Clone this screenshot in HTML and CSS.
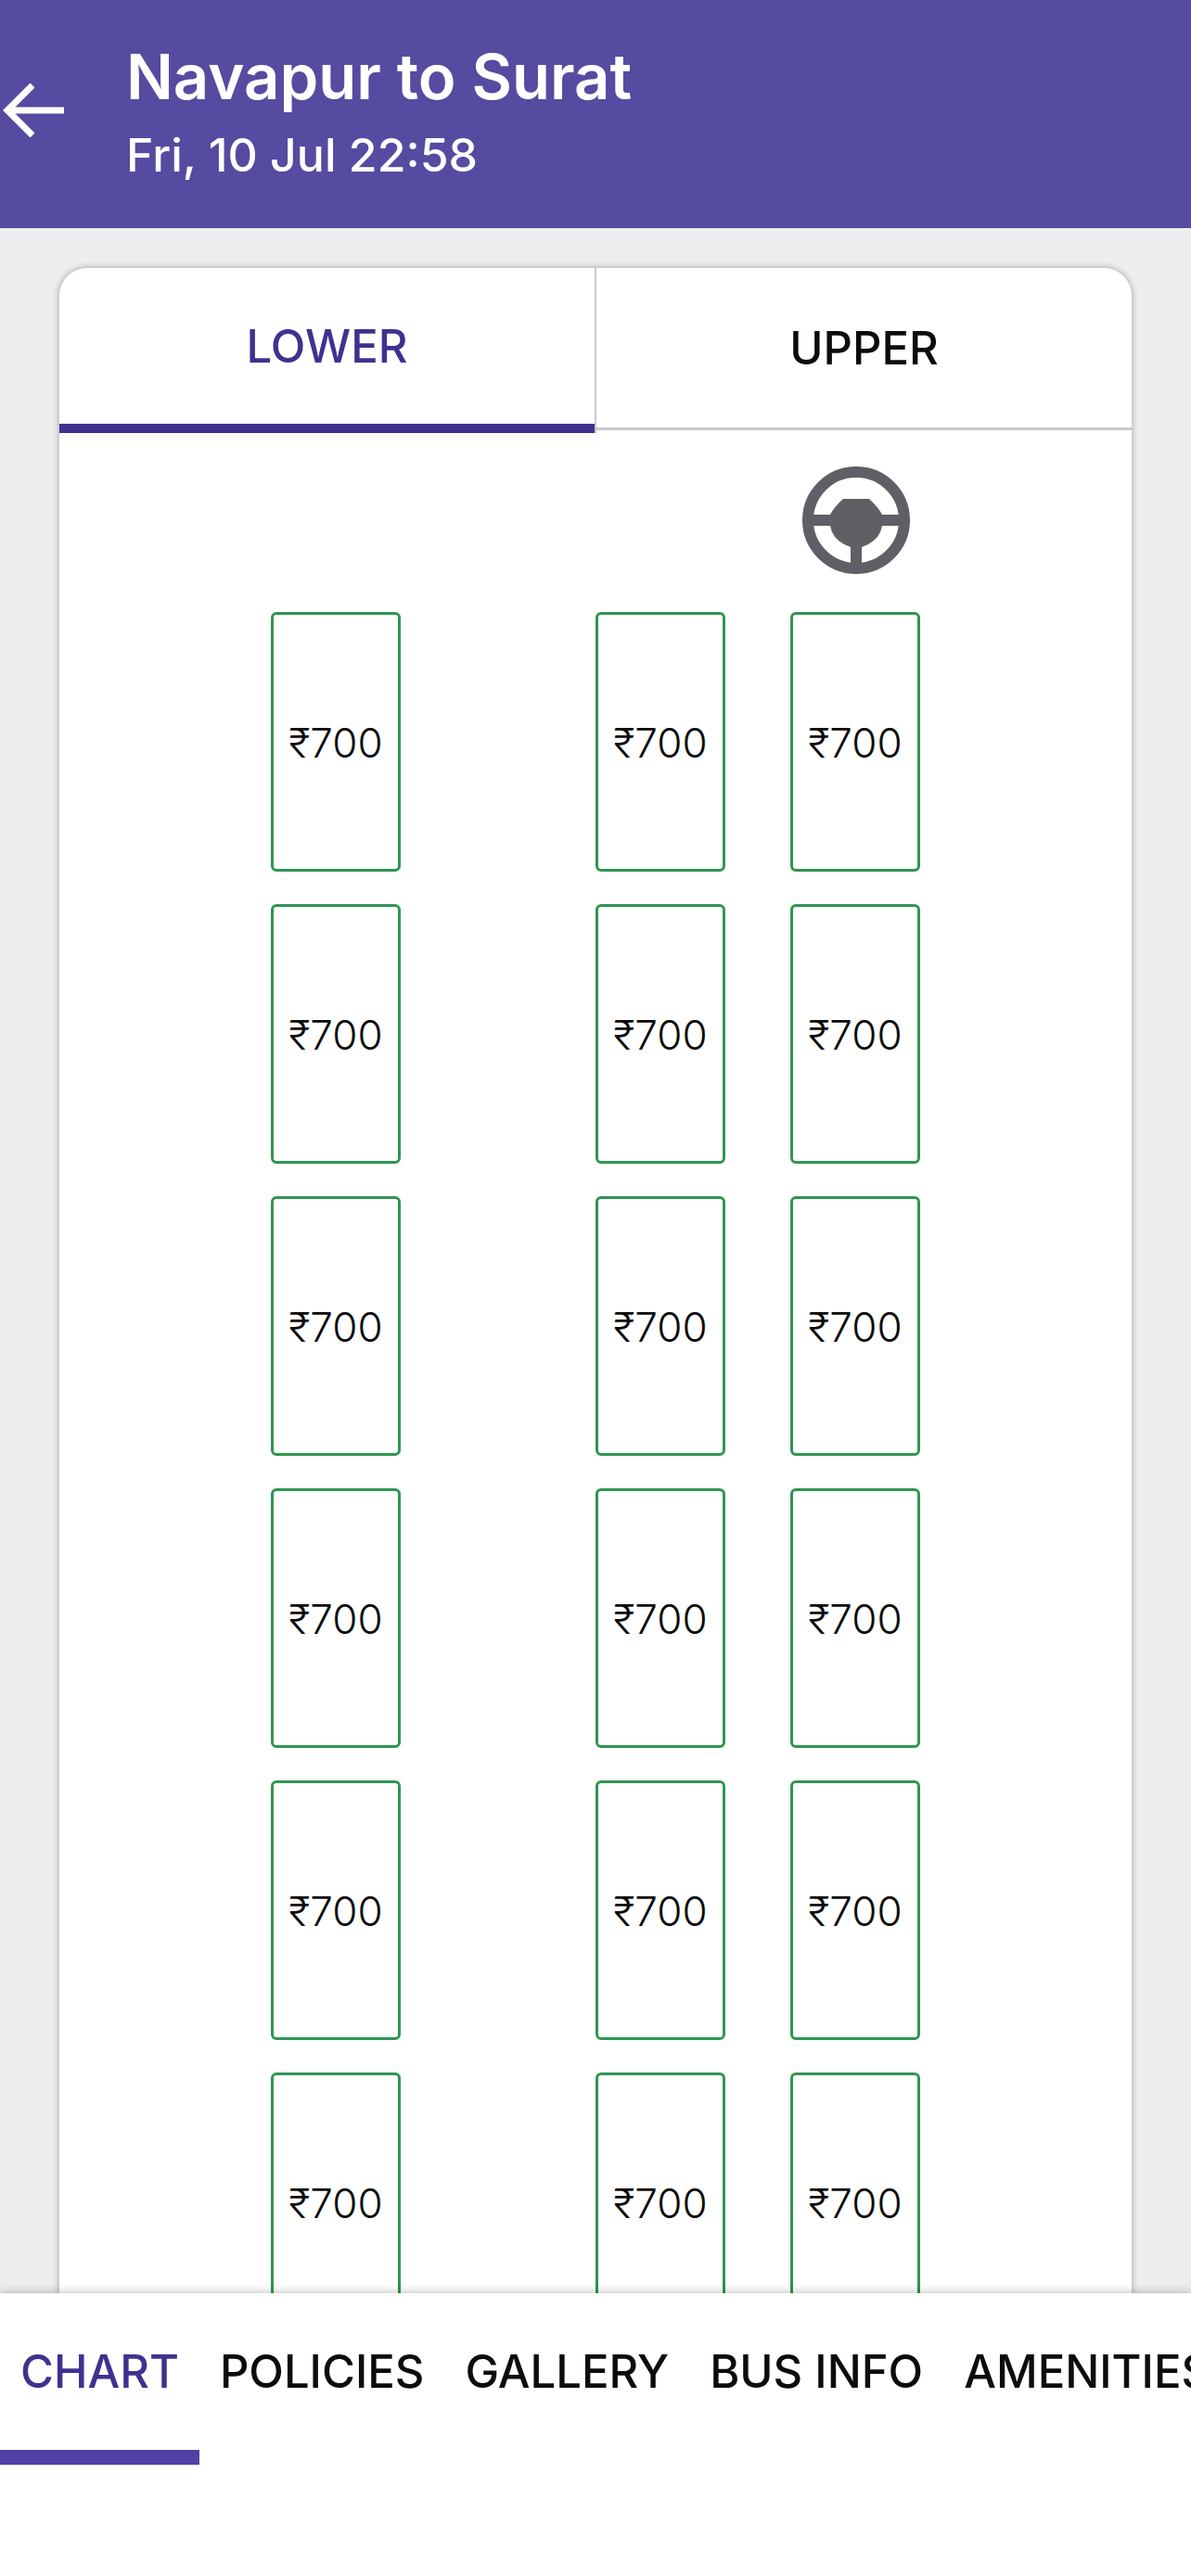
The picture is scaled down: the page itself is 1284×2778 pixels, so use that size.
FILE: index.html
```html
<!DOCTYPE html>
<html lang="en">
  <head>
    <meta charset="utf-8">
    <meta name="viewport" content="width=device-width">
    <title>Navapur to Surat</title>
    <link rel="stylesheet" href="styles.css">
  </head>
  <body>
    <header class="header">
      <a class="header__back" href="#" aria-label="Back">
        <svg width="68" height="60" viewBox="0 0 68 60" fill="none" stroke="currentColor" stroke-width="7">
          <path d="M67 31H5M33 4L6 31l27 27" />
        </svg>
      </a>
      <div>
        <h1 class="header__title">Navapur to Surat</h1>
        <p class="header__date">Fri, 10 Jul 22:58</p>
      </div>
    </header>

    <main class="content">
      <div class="card">
        <div class="decks">
          <button class="deck deck--active" type="button">LOWER</button>
          <button class="deck" type="button">UPPER</button>
        </div>

        <div class="seats">
          <svg class="wheel" width="122" height="122" viewBox="0 0 122 122" fill="#5f6065">
            <circle cx="62" cy="58" r="52" fill="none" stroke="#5f6065" stroke-width="12" />
            <path d="M11 52h23q4-8 14-17h28q10 9 14 17h23v12H90q-2 13-15 20l-7 3v22H56V87l-7-3q-13-7-15-20H11z" />
          </svg>

          <button class="seat seat--single" type="button">₹700</button>
          <button class="seat seat--aisle" type="button">₹700</button>
          <button class="seat seat--window" type="button">₹700</button>

          <button class="seat seat--single" type="button">₹700</button>
          <button class="seat seat--aisle" type="button">₹700</button>
          <button class="seat seat--window" type="button">₹700</button>

          <button class="seat seat--single" type="button">₹700</button>
          <button class="seat seat--aisle" type="button">₹700</button>
          <button class="seat seat--window" type="button">₹700</button>

          <button class="seat seat--single" type="button">₹700</button>
          <button class="seat seat--aisle" type="button">₹700</button>
          <button class="seat seat--window" type="button">₹700</button>

          <button class="seat seat--single" type="button">₹700</button>
          <button class="seat seat--aisle" type="button">₹700</button>
          <button class="seat seat--window" type="button">₹700</button>

          <button class="seat seat--single" type="button">₹700</button>
          <button class="seat seat--aisle" type="button">₹700</button>
          <button class="seat seat--window" type="button">₹700</button>
        </div>
      </div>
    </main>

    <nav class="tabs">
      <a class="tab tab--active" href="#chart">CHART</a>
      <a class="tab" href="#policies">POLICIES</a>
      <a class="tab" href="#gallery">GALLERY</a>
      <a class="tab" href="#businfo">BUS INFO</a>
      <a class="tab" href="#amenities">AMENITIES</a>
    </nav>
  </body>
</html>
```
FILE: styles.css
```css
* {
  box-sizing: border-box;
}
body {
  margin: 0;
  height: 100vh;
  display: flex;
  flex-direction: column;
  overflow: hidden;
  background: #eeeeef;
  color: #0c0c0c;
  font-family: Inter, "Liberation Sans", sans-serif;
}
button {
  font-family: inherit;
  color: inherit;
  cursor: pointer;
}

/* top bar */
.header {
  display: flex;
  align-items: center;
  gap: 66px;
  padding: 39px 0 49px 2px;
  background: #554ba0;
  color: #fff;
}
.header__back {
  display: flex;
  color: inherit;
}
.header__title {
  margin: 0;
  font-size: 67px;
  line-height: 88px;
  font-weight: 600;
}
.header__date {
  margin: 0;
  padding-top: 10px;
  font-size: 50px;
  line-height: 60px;
  font-weight: 500;
}

/* seat chart */
.content {
  flex: 1;
  min-height: 0;
  overflow: hidden;
  padding: 41px 62px 0;
}
.card {
  border-radius: 32px 32px 0 0;
  border: 2px solid #cfcfd0;
  border-bottom: 0;
  background: #fff;
  box-shadow: 0 0 6px rgba(0, 0, 0, 0.18);
}
.decks {
  display: flex;
  height: 178px;
}
.deck {
  flex: 1;
  margin-bottom: 3px;
  padding: 0;
  border: 0;
  border-bottom: 3px solid #c8c8c8;
  background: none;
  font-size: 49px;
  font-weight: 500;
}
.deck--active {
  margin-bottom: 0;
  padding-bottom: 10px;
  border-right: 2px solid #c8c8c8;
  border-bottom: 0;
  box-shadow: inset 0 -10px #40318f;
  color: #40318f;
}
.seats {
  display: grid;
  grid-template-columns: 140px 70px 140px 140px;
  grid-template-rows: 122px;
  grid-auto-rows: 280px;
  gap: 35px 70px;
  justify-content: center;
  padding: 36px 0;
}
.wheel {
  grid-column: 4;
  justify-self: center;
}
.seat {
  padding: 2px 0 0;
  border: 3px solid #2f9650;
  border-radius: 6px;
  background: #fff;
  font-size: 44px;
  font-weight: 300;
}
.seat--single {
  grid-column: 1;
}
.seat--aisle {
  grid-column: 3;
}
.seat--window {
  grid-column: 4;
}

/* bottom tabs */
.tabs {
  display: flex;
  height: 305px;
  padding-bottom: 120px;
  overflow: hidden;
  background: #fff;
  box-shadow: 0 0 10px rgba(0, 0, 0, 0.3);
}
.tab {
  flex: none;
  padding: 55px 22px 0;
  color: inherit;
  font-size: 49px;
  line-height: 60px;
  font-weight: 500;
  text-decoration: none;
  white-space: nowrap;
}
.tab--active {
  border-bottom: 16px solid #5042a5;
  color: #40318f;
}
```
